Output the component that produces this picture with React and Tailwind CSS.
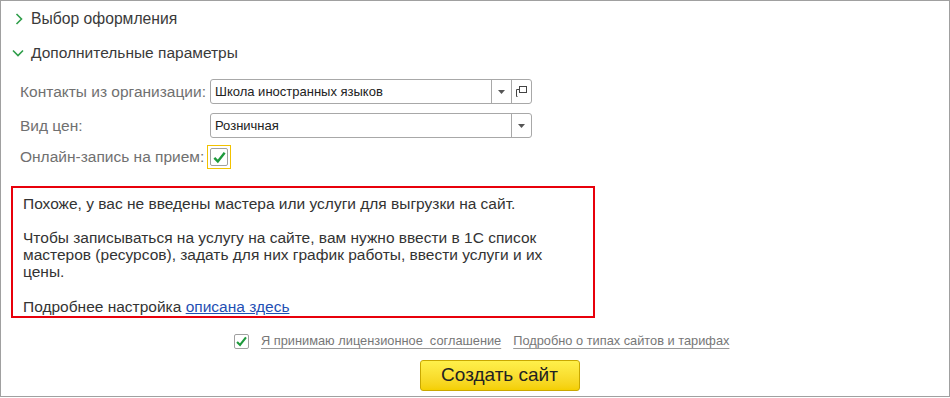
import React from "react";

const F = { fontFamily: '"Liberation Sans", Arial, sans-serif' };

function ChevronRight() {
  return (
    <svg width="8" height="12" viewBox="0 0 8 12" className="block">
      <path d="M1.5 1 L6.5 6 L1.5 11" fill="none" stroke="#2f9e4a" strokeWidth="1.6" />
    </svg>
  );
}
function ChevronDown() {
  return (
    <svg width="12" height="8" viewBox="0 0 12 8" className="block">
      <path d="M1 1.5 L6 6.5 L11 1.5" fill="none" stroke="#2f9e4a" strokeWidth="1.6" />
    </svg>
  );
}
function Tri() {
  return (
    <svg width="7" height="4" viewBox="0 0 7 4" className="block">
      <path d="M0 0 H7 L3.5 4 Z" fill="#555" />
    </svg>
  );
}
function OpenIcon() {
  return (
    <svg width="11" height="11" viewBox="0 0 11 11" className="block">
      <rect x="3.5" y="0.5" width="7" height="6" fill="none" stroke="#444" strokeWidth="1" />
      <path d="M3.5 3.5 H0.5 V10.5 M0.5 10.5 H1.5" fill="none" stroke="#444" strokeWidth="1" />
    </svg>
  );
}
function Check({ size = 16 }) {
  return (
    <svg width={size} height={size} viewBox="0 0 16 16" className="block">
      <path d="M2.5 8.5 L6.2 12.2 L13.5 3" fill="none" stroke="#1e9a3c" strokeWidth="2.6" />
    </svg>
  );
}

export default function App() {
  return (
    <div style={F} className="w-[950px] h-[397px] border border-[#a0a0a0] bg-white text-[#333] overflow-hidden">
      <div className="flex flex-col">
        <div className="mt-[8px] h-[20px] flex items-center pl-[13px]">
          <div className="w-[17px] flex justify-start pl-[1px]"><ChevronRight /></div>
          <span className="text-[15.7px] text-[#3a3a3a]">Выбор оформления</span>
        </div>
        <div className="mt-[14px] h-[20px] flex items-center pl-[11px]">
          <div className="w-[19px] flex"><ChevronDown /></div>
          <span className="text-[15.5px] text-[#3a3a3a]">Дополнительные параметры</span>
        </div>

        <div className="mt-[16px] flex items-center h-[25px]">
          <span className="w-[209px] pl-[19px] text-[15.5px] text-[#707070] whitespace-nowrap">Контакты из организации:</span>
          <div className="flex h-[25px] w-[322px] border border-[#a8a8a8] rounded-[3px]">
            <div className="flex-1 flex items-center pl-[4px] text-[13px] text-[#222]">Школа иностранных языков</div>
            <div className="w-[20px] border-l border-[#a8a8a8] flex items-center justify-center"><Tri /></div>
            <div className="w-[20px] border-l border-[#a8a8a8] flex items-center justify-center"><OpenIcon /></div>
          </div>
        </div>

        <div className="mt-[9px] flex items-center h-[25px]">
          <span className="w-[209px] pl-[19px] text-[15.5px] text-[#707070]">Вид цен:</span>
          <div className="flex h-[25px] w-[322px] border border-[#a8a8a8] rounded-[3px]">
            <div className="flex-1 flex items-center pl-[4px] text-[13px] text-[#222]">Розничная</div>
            <div className="w-[20px] border-l border-[#a8a8a8] flex items-center justify-center"><Tri /></div>
          </div>
        </div>

        <div className="mt-[7px] flex items-center h-[24px]">
          <span className="w-[206px] pl-[19px] text-[15.5px] text-[#707070] whitespace-nowrap">Онлайн-запись на прием:</span>
          <div className="w-[24px] h-[24px] border border-[#f2c200] flex items-center justify-center">
            <div className="w-[18px] h-[18px] border border-[#a0a0a0] rounded-[2px] flex items-center justify-center bg-white">
              <Check size={15} />
            </div>
          </div>
        </div>

        <div className="ml-[10px] mt-[17px] w-[584px] h-[132px] border-2 border-[#e8000b] pl-[10px] pt-[7px] text-[15.5px] leading-[17px] text-[#333]">
          <div className="whitespace-nowrap">Похоже, у вас не введены мастера или услуги для выгрузки на сайт.</div>
          <div className="h-[17px]" />
          <div className="whitespace-nowrap">Чтобы записываться на услугу на сайте, вам нужно ввести в 1С список</div>
          <div className="whitespace-nowrap">мастеров (ресурсов), задать для них график работы, ввести услуги и их</div>
          <div>цены.</div>
          <div className="h-[17px]" />
          <div className="mt-[1px] whitespace-nowrap">Подробнее настройка <span className="text-[#1f4fb4] underline">описана здесь</span></div>
        </div>

        <div className="mt-[14px] flex items-center h-[18px] pl-[233px] text-[12.8px]">
          <div className="w-[15px] h-[15px] border border-[#a0a0a0] rounded-[2px] flex items-center justify-center">
            <Check size={13} />
          </div>
          <span className="ml-[12px] text-[#777] underline decoration-[#999] underline-offset-[3px] whitespace-pre">Я принимаю лицензионное  соглашение</span>
          <span className="ml-[12px] text-[#777] underline decoration-[#999] underline-offset-[3px] whitespace-nowrap">Подробно о типах сайтов и тарифах</span>
        </div>

        <div className="mt-[10px] flex justify-center pl-[49px]">
          <div className="w-[160px] h-[31px] rounded-[3px] border border-[#c9a800] bg-gradient-to-b from-[#fff04a] to-[#f4cf00] flex items-center justify-center text-[19px] text-[#222]">
            Создать сайт
          </div>
        </div>
      </div>
    </div>
  );
}
